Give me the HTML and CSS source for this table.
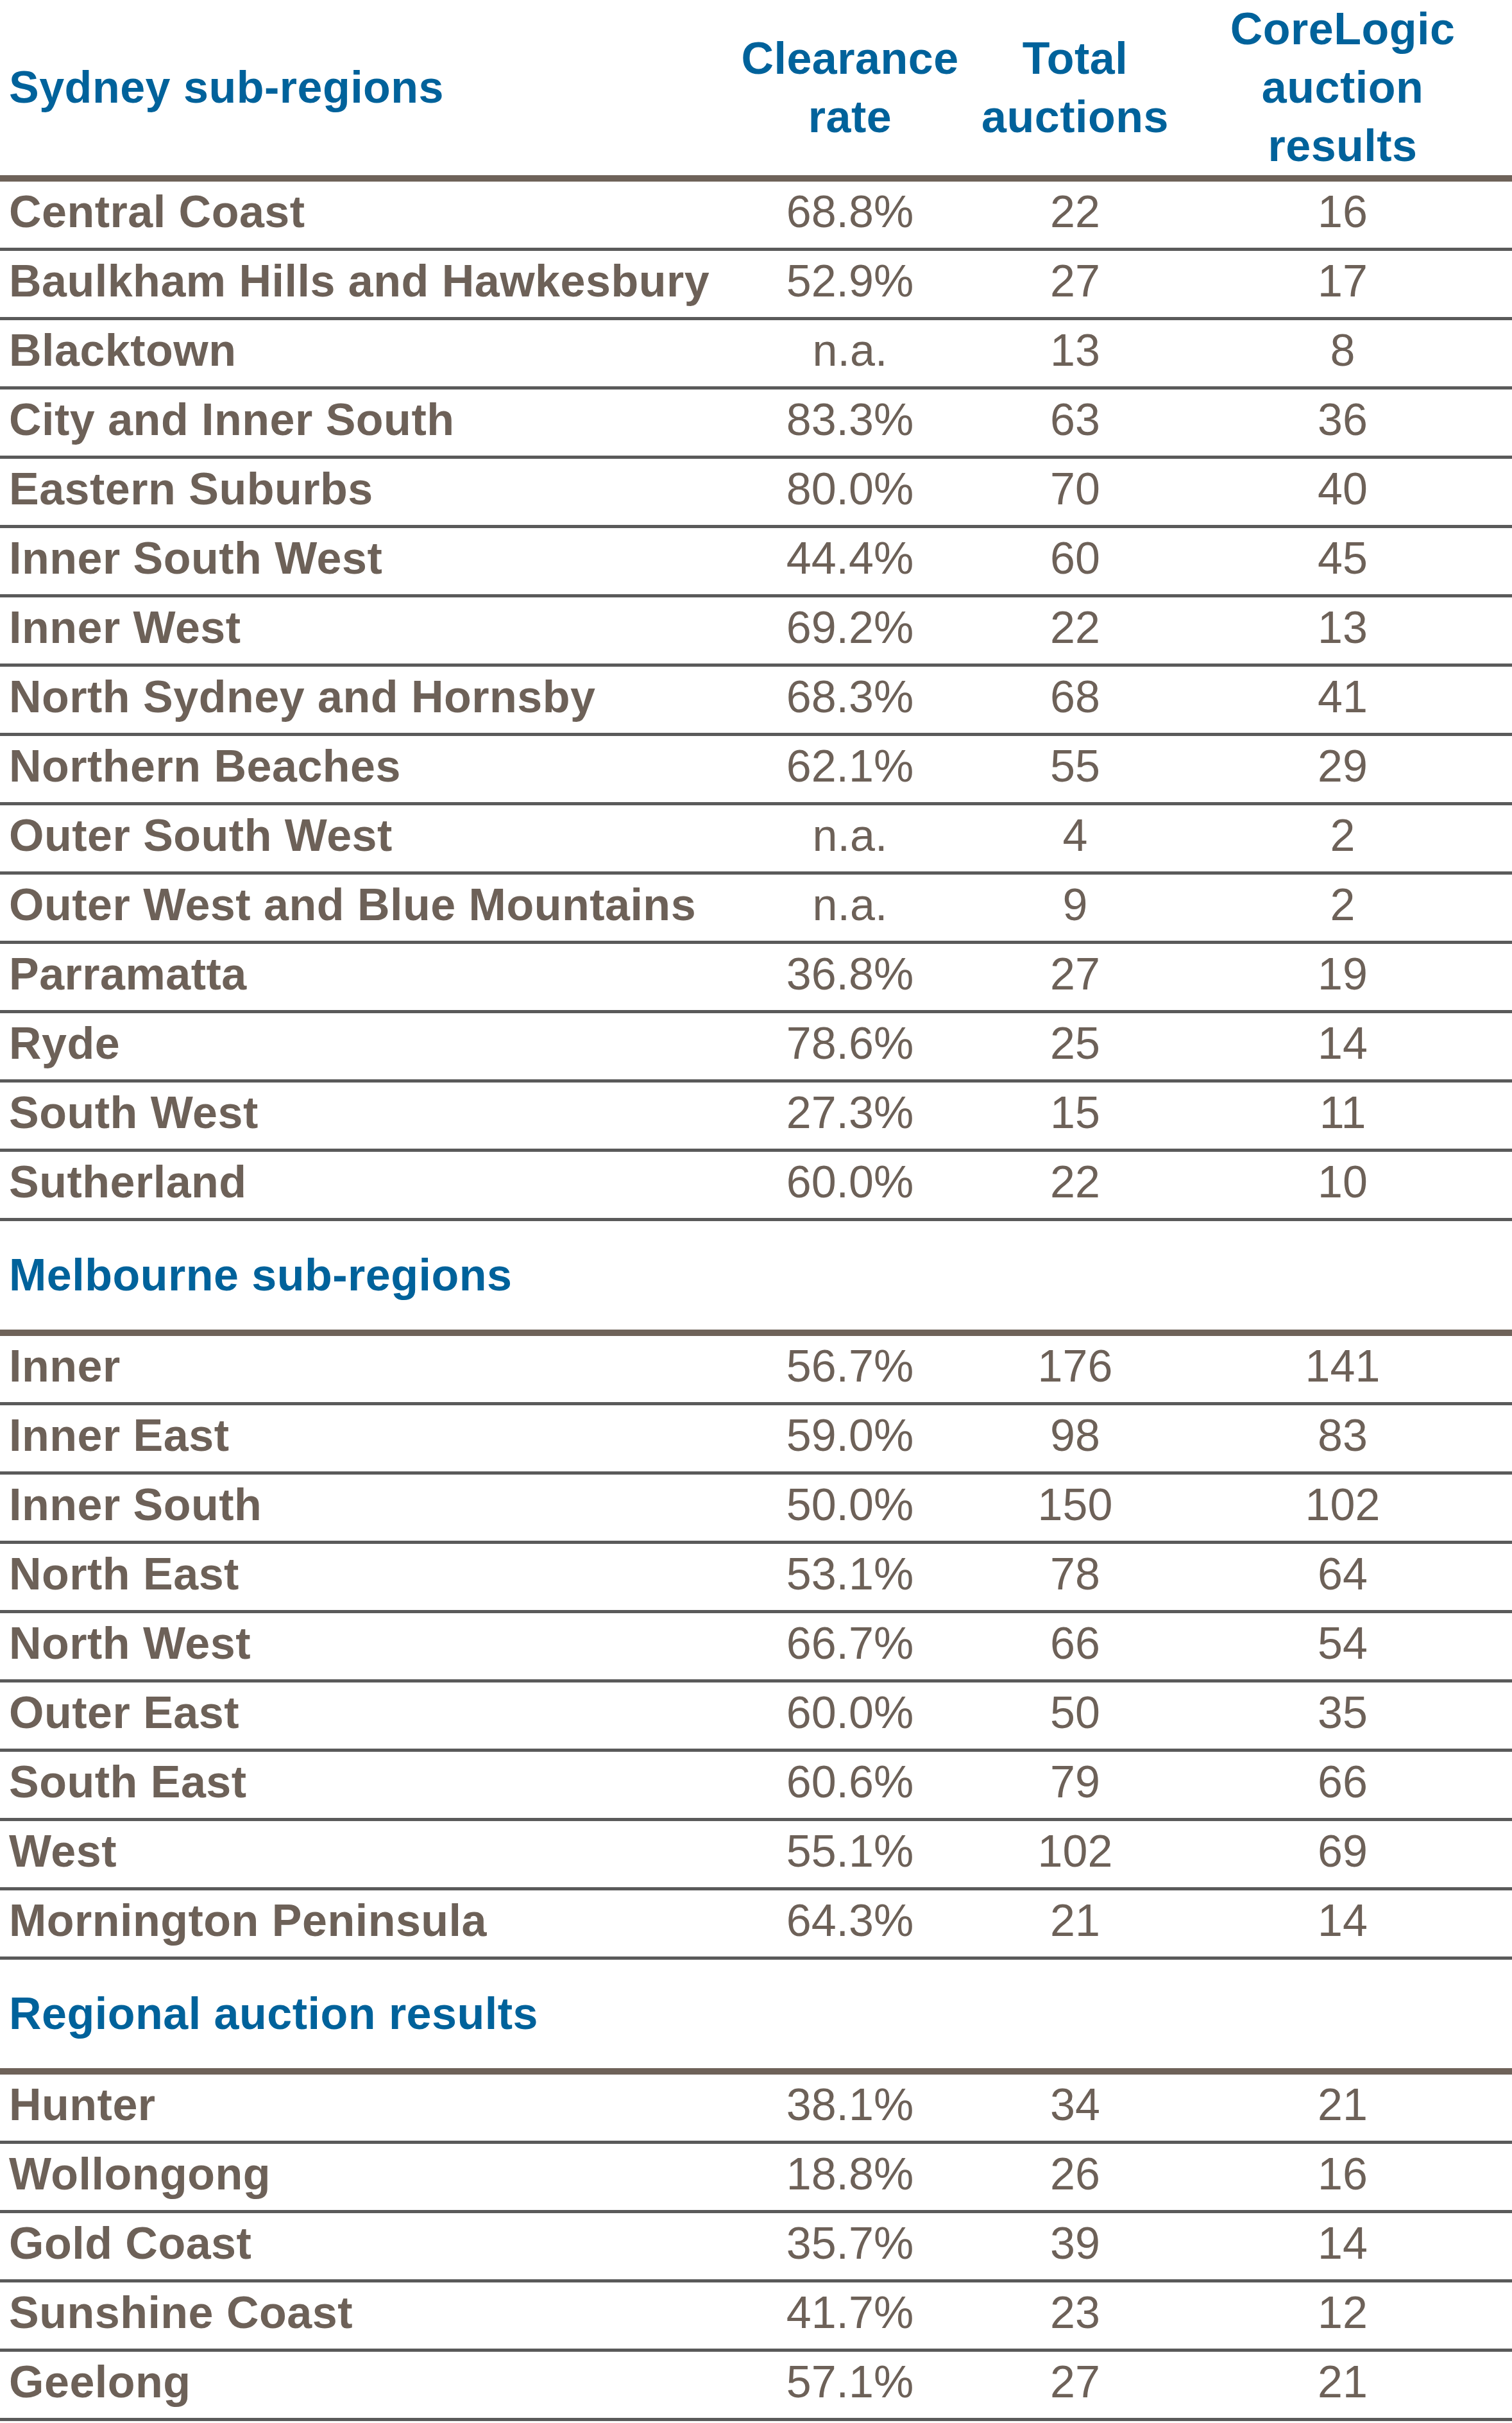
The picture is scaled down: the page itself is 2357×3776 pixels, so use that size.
FILE: index.html
```html
<!DOCTYPE html>
<html lang="en">
<head>
<meta charset="utf-8">
<title>Auction results by sub-region</title>
<link rel="stylesheet" href="styles.css">
</head>
<body>
<table class="auction">
  <colgroup>
    <col class="c-region">
    <col class="c-rate">
    <col class="c-total">
    <col class="c-cl">
  </colgroup>
  <thead>
    <tr class="head">
      <th class="region">Sydney sub-regions</th>
      <th>Clearance<br>rate</th>
      <th>Total<br>auctions</th>
      <th>CoreLogic<br>auction<br>results</th>
    </tr>
  </thead>
  <tbody>
    <tr><td class="region">Central Coast</td><td>68.8%</td><td>22</td><td>16</td></tr>
    <tr><td class="region">Baulkham Hills and Hawkesbury</td><td>52.9%</td><td>27</td><td>17</td></tr>
    <tr><td class="region">Blacktown</td><td>n.a.</td><td>13</td><td>8</td></tr>
    <tr><td class="region">City and Inner South</td><td>83.3%</td><td>63</td><td>36</td></tr>
    <tr><td class="region">Eastern Suburbs</td><td>80.0%</td><td>70</td><td>40</td></tr>
    <tr><td class="region">Inner South West</td><td>44.4%</td><td>60</td><td>45</td></tr>
    <tr><td class="region">Inner West</td><td>69.2%</td><td>22</td><td>13</td></tr>
    <tr><td class="region">North Sydney and Hornsby</td><td>68.3%</td><td>68</td><td>41</td></tr>
    <tr><td class="region">Northern Beaches</td><td>62.1%</td><td>55</td><td>29</td></tr>
    <tr><td class="region">Outer South West</td><td>n.a.</td><td>4</td><td>2</td></tr>
    <tr><td class="region">Outer West and Blue Mountains</td><td>n.a.</td><td>9</td><td>2</td></tr>
    <tr><td class="region">Parramatta</td><td>36.8%</td><td>27</td><td>19</td></tr>
    <tr><td class="region">Ryde</td><td>78.6%</td><td>25</td><td>14</td></tr>
    <tr><td class="region">South West</td><td>27.3%</td><td>15</td><td>11</td></tr>
    <tr><td class="region">Sutherland</td><td>60.0%</td><td>22</td><td>10</td></tr>

    <tr class="section"><th class="region" colspan="4">Melbourne sub-regions</th></tr>
    <tr><td class="region">Inner</td><td>56.7%</td><td>176</td><td>141</td></tr>
    <tr><td class="region">Inner East</td><td>59.0%</td><td>98</td><td>83</td></tr>
    <tr><td class="region">Inner South</td><td>50.0%</td><td>150</td><td>102</td></tr>
    <tr><td class="region">North East</td><td>53.1%</td><td>78</td><td>64</td></tr>
    <tr><td class="region">North West</td><td>66.7%</td><td>66</td><td>54</td></tr>
    <tr><td class="region">Outer East</td><td>60.0%</td><td>50</td><td>35</td></tr>
    <tr><td class="region">South East</td><td>60.6%</td><td>79</td><td>66</td></tr>
    <tr><td class="region">West</td><td>55.1%</td><td>102</td><td>69</td></tr>
    <tr><td class="region">Mornington Peninsula</td><td>64.3%</td><td>21</td><td>14</td></tr>

    <tr class="section"><th class="region" colspan="4">Regional auction results</th></tr>
    <tr><td class="region">Hunter</td><td>38.1%</td><td>34</td><td>21</td></tr>
    <tr><td class="region">Wollongong</td><td>18.8%</td><td>26</td><td>16</td></tr>
    <tr><td class="region">Gold Coast</td><td>35.7%</td><td>39</td><td>14</td></tr>
    <tr><td class="region">Sunshine Coast</td><td>41.7%</td><td>23</td><td>12</td></tr>
    <tr><td class="region">Geelong</td><td>57.1%</td><td>27</td><td>21</td></tr>
  </tbody>
</table>
</body>
</html>
```

FILE: styles.css
```css
html, body {
  margin: 0;
  padding: 0;
  background: #ffffff;
}

.auction {
  width: 2357px;
  border-collapse: separate;
  border-spacing: 0;
  table-layout: fixed;
  font-family: "Liberation Sans", Arial, sans-serif;
  font-size: 70px;
  color: #6d6158;
}

.c-region { width: 1127px; }
.c-rate { width: 396px; }
.c-total { width: 306px; }
.c-cl { width: 528px; }

.auction th,
.auction td {
  padding: 0;
  text-align: center;
  white-space: nowrap;
}

.auction .region {
  text-align: left;
  padding-left: 14px;
}

/* top header row */
.head th {
  color: #00629b;
  font-weight: bold;
  letter-spacing: 0.5px;
  line-height: 91px;
  height: 273px;
  vertical-align: middle;
  border-bottom: 10px solid #6e6259;
}

/* data rows */
.auction td {
  line-height: 95px;
  padding-bottom: 8px;
  border-bottom: 5px solid #5a5a5a;
  vertical-align: top;
}

.auction td.region {
  font-weight: bold;
  letter-spacing: 0.5px;
}

/* section header rows */
.section th {
  color: #00629b;
  font-weight: bold;
  letter-spacing: 0.5px;
  line-height: 169px;
  border-bottom: 10px solid #6e6259;
}
```
